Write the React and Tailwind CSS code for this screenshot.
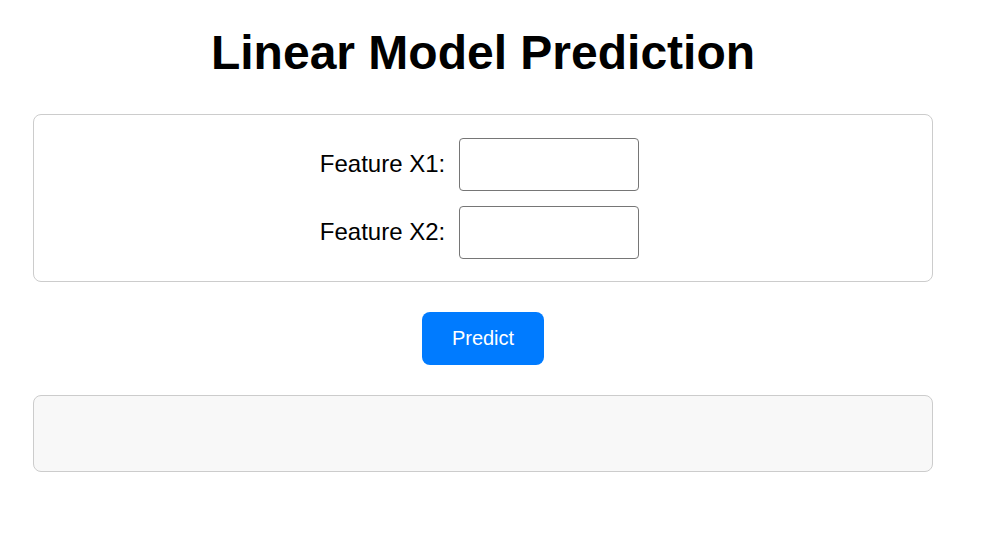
export default function App() {
  return (
    <div className="min-h-[556px] bg-white" style={{ fontFamily: '"Liberation Sans", Arial, sans-serif' }}>
      <div className="ml-[33px] w-[900px] pt-[22px]">
        <h1 className="text-center text-[48px] font-bold leading-[62px] text-black">Linear Model Prediction</h1>
        <div className="mt-[30px] flex flex-col items-center gap-[15px] rounded-lg border border-[#cccccc] pt-[23px] pb-[22px]">
          <div className="flex items-center gap-[14px] pr-[7px]">
            <label className="-mt-[2px] text-[24px] text-black">Feature X1:</label>
            <input className="h-[53px] w-[180px] rounded-[4px] border border-[#767676] bg-white" />
          </div>
          <div className="flex items-center gap-[14px] pr-[7px]">
            <label className="-mt-[2px] text-[24px] text-black">Feature X2:</label>
            <input className="h-[53px] w-[180px] rounded-[4px] border border-[#767676] bg-white" />
          </div>
        </div>
        <div className="mt-[30px] flex justify-center">
          <button className="h-[53px] w-[122px] rounded-lg bg-[#007bff] pb-[2px] text-[20px] text-white">Predict</button>
        </div>
        <div className="mt-[30px] h-[77px] rounded-lg border border-[#cccccc] bg-[#f8f8f8]"></div>
      </div>
    </div>
  );
}
